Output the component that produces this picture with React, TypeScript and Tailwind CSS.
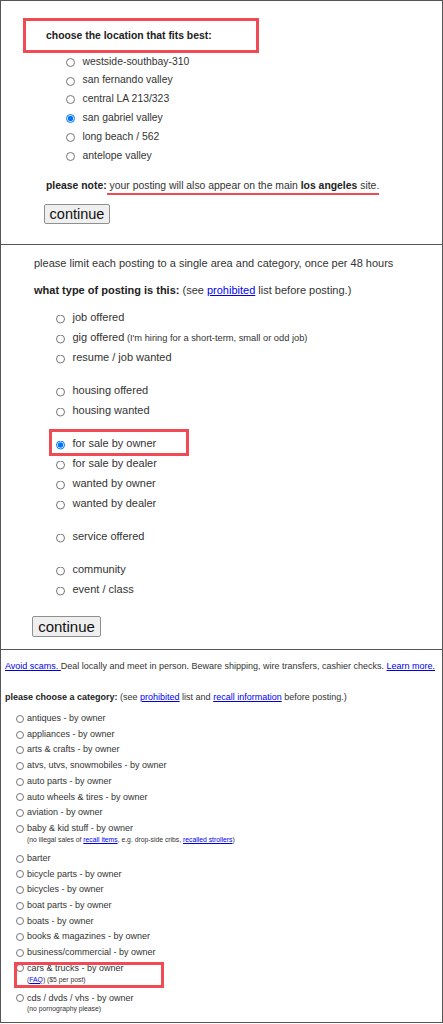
import React from 'react';

const FONT = "font-['Liberation_Sans',Arial,sans-serif]";

const LOCATIONS = [
	'westside-southbay-310',
	'san fernando valley',
	'central LA 213/323',
	'san gabriel valley',
	'long beach / 562',
	'antelope valley',
];

const TYPE_GROUPS: string[][] = [
	['job offered', 'gig offered', 'resume / job wanted'],
	['housing offered', 'housing wanted'],
	['for sale by owner', 'for sale by dealer', 'wanted by owner', 'wanted by dealer'],
	['service offered'],
	['community', 'event / class'],
];

interface Category {
	label: string;
	note?: React.ReactNode;
	boxed?: boolean;
}

const Link = ({ children }: { children: React.ReactNode }) => (
	<a href="#" className="text-[#0000ee] underline">
		{children}
	</a>
);

const CATEGORIES: Category[] = [
	{ label: 'antiques - by owner' },
	{ label: 'appliances - by owner' },
	{ label: 'arts & crafts - by owner' },
	{ label: 'atvs, utvs, snowmobiles - by owner' },
	{ label: 'auto parts - by owner' },
	{ label: 'auto wheels & tires - by owner' },
	{ label: 'aviation - by owner' },
	{
		label: 'baby & kid stuff - by owner',
		note: (
			<>
				(no illegal sales of <Link>recall items</Link>, e.g. drop-side cribs,{' '}
				<Link>recalled strollers</Link>)
			</>
		),
	},
	{ label: 'barter' },
	{ label: 'bicycle parts - by owner' },
	{ label: 'bicycles - by owner' },
	{ label: 'boat parts - by owner' },
	{ label: 'boats - by owner' },
	{ label: 'books & magazines - by owner' },
	{ label: 'business/commercial - by owner' },
	{
		label: 'cars & trucks - by owner',
		boxed: true,
		note: (
			<>
				(<Link>FAQ</Link>) ($5 per post)
			</>
		),
	},
	{ label: 'cds / dvds / vhs - by owner', note: '(no pornography please)' },
];

function LocationStep() {
	return (
		<section className="h-[244px] shrink-0 border-b border-[#555] pt-[17px] text-[10.4px] text-[#333]">
			<div className="ml-[22px] flex h-[35px] w-[236px] items-center border-[3px] border-[#f04a55] pl-[20px] font-bold text-[#222]">
				choose the location that fits best:
			</div>
			<div className="-mt-[1px] pl-[65px]">
				{LOCATIONS.map((loc) => (
					<label key={loc} className="flex h-[18.8px] items-center gap-[7.5px]">
						<input
							type="radio"
							name="area"
							defaultChecked={loc === 'san gabriel valley'}
							className="m-0 h-[9px] w-[9px] shrink-0 translate-y-[1px] accent-[#0075ff]"
						/>
						<span>{loc}</span>
					</label>
				))}
			</div>
			<p className="ml-[45px] mt-[14px] leading-[14px]">
				<b className="text-[#222]">please note:</b>
				<span className="border-b-2 border-[#f04a55] pb-[2px]">
					{' '}
					your posting will also appear on the main <b className="text-[#222]">los angeles</b> site.
				</span>
			</p>
			<button className="ml-[43px] mt-[11px] flex h-[20px] w-[66px] items-center justify-center rounded-[2px] border border-[#8f8f8f] bg-[#efefef] text-[14.5px] leading-none text-[#111]">
				continue
			</button>
		</section>
	);
}

function TypeStep() {
	return (
		<section className="h-[405px] shrink-0 border-b border-[#555] pl-[33px] pt-[11px] text-[11px] text-[#333]">
			<p className="leading-[14px]">please limit each posting to a single area and category, once per 48 hours</p>
			<p className="mt-[13px] leading-[14px]">
				<b className="text-[#222]">what type of posting is this:</b> (see <Link>prohibited</Link> list before
				posting.)
			</p>
			<div className="mt-[10px] pl-[22px]">
				{TYPE_GROUPS.map((group, gi) => (
					<div key={gi} className={gi < TYPE_GROUPS.length - 1 ? 'mb-[13px]' : ''}>
						{group.map((t) => (
							<label key={t} className="relative flex h-[20px] items-center gap-[7.5px]">
								{t === 'for sale by owner' && (
									<span className="pointer-events-none absolute -left-[7px] -top-[4px] h-[27px] w-[140px] border-[3px] border-[#f04a55]" />
								)}
								<input
									type="radio"
									name="type"
									defaultChecked={t === 'for sale by owner'}
									className="m-0 h-[9px] w-[9px] shrink-0 translate-y-[1.5px] accent-[#0075ff]"
								/>
								<span>
									{t}
									{t === 'gig offered' && (
										<span className="text-[9.3px]"> (I'm hiring for a short-term, small or odd job)</span>
									)}
								</span>
							</label>
						))}
					</div>
				))}
			</div>
			<button className="-ml-[2px] mt-[17px] flex h-[21px] w-[69px] items-center justify-center rounded-[2px] border border-[#8f8f8f] bg-[#efefef] text-[15px] leading-none text-[#111]">
				continue
			</button>
		</section>
	);
}

function CategoryStep() {
	return (
		<section className="flex-1 pl-[4px] pt-[10px] text-[9px] text-[#333]">
			<p className="leading-[12px]">
				<Link>Avoid scams. </Link>Deal locally and meet in person. Beware shipping, wire transfers, cashier
				checks. <Link>Learn more.</Link>
			</p>
			<p className="mt-[19px] leading-[12px]">
				<b className="text-[#222]">please choose a category:</b> (see <Link>prohibited</Link> list and{' '}
				<Link>recall information</Link> before posting.)
			</p>
			<div className="mt-[8px] pl-[11px]">
				{CATEGORIES.map((c) => (
					<div key={c.label} className={c.note ? 'relative mb-[7px]' : 'relative'}>
						{c.boxed && (
							<span className="pointer-events-none absolute -left-[2px] top-[1px] z-10 h-[26px] w-[150px] border-[3px] border-[#f04a55]" />
						)}
						<label className="flex h-[15.7px] items-center gap-[3px]">
							<input type="radio" name="cat" className="m-0 h-[8px] w-[8px] shrink-0 accent-[#0075ff]" />
							<span>{c.label}</span>
						</label>
						{c.note && (
							<div className="-mt-[1.75px] ml-[11px] h-[9px] text-[6.8px] leading-[9px]">{c.note}</div>
						)}
					</div>
				))}
			</div>
		</section>
	);
}

export default function App() {
	return (
		<div className={`h-[1024px] w-[443px] bg-white ${FONT}`}>
			<div className="flex h-[1023px] flex-col border border-[#555]">
				<LocationStep />
				<TypeStep />
				<CategoryStep />
			</div>
		</div>
	);
}
